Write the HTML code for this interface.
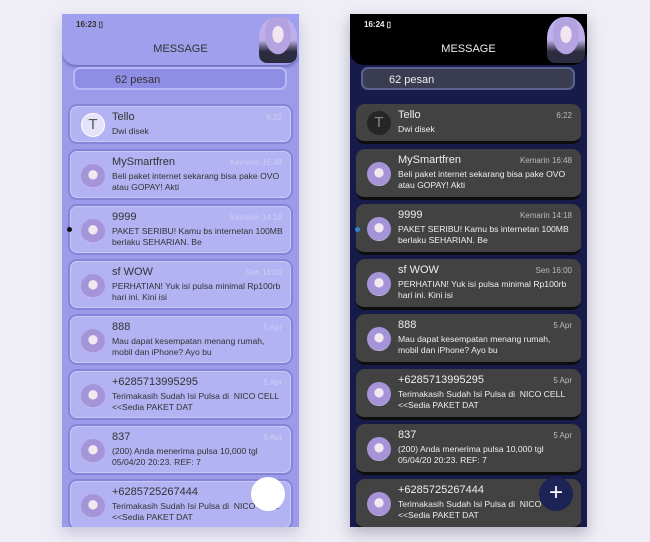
<!DOCTYPE html>
<html><head><meta charset="utf-8"><style>
*{margin:0;padding:0;box-sizing:border-box}
body{width:650px;height:542px;background:#efeef6;font-family:"Liberation Sans",sans-serif;position:relative;overflow:hidden}
.ph{position:absolute;top:14px;width:237px;height:513px;overflow:hidden}
.l{left:62px;background:#9c9bea;box-shadow:0 6px 14px rgba(120,120,170,.35)}
.r{left:350px;background:#161b4a;box-shadow:0 6px 14px rgba(60,60,90,.35)}
.hd{position:absolute;left:0;top:0;width:237px;height:51px;border-radius:0 0 14px 14px}
.l .hd{background:#a09fed;box-shadow:0 2px 3px rgba(60,60,140,.5)}
.r .hd{background:#000}
.tm{position:absolute;left:14px;top:6px;font-size:8px;font-weight:bold}
.l .tm{color:#333}.r .tm{color:#eee}
.sig{position:absolute;right:12px;top:6px;font-size:7px}
.l .sig{color:#333}.r .sig{color:#ddd}
.ti{position:absolute;left:0;width:237px;top:29px;text-align:center;font-size:11px}
.l .ti{color:#333}.r .ti{color:#eee}
.av{position:absolute;right:2px;top:3px;width:38px;height:46px;border-radius:45% 45% 8px 8px;background:radial-gradient(ellipse at 50% 38%,#f3e6ef 0 20%,#b3a3e0 22% 48%,transparent 50%),linear-gradient(#c0b0ea 0 50%,#2c2c40 75%)}
.sr{position:absolute;left:11px;top:53px;width:214px;height:23px;border-radius:7px;font-size:11px;padding:5px 0 0 40px}
.l .sr{background:#8f8ee6;border:2px solid #b9b8f4;color:#333}
.r .sr{background:#3a3d52;border:2px solid #5a6290;color:#eee;padding-left:26px}
.c{position:absolute;left:6px;width:225px;height:51px;border-radius:9px;overflow:hidden}
.c.f{height:40px}
.l .c{background:#b3b2f3;border:2px solid #8584d8;box-shadow:inset 0 0 0 1px #c9c8f8}
.r .c{background:#424242;border-bottom:3px solid #0d0d0d}
.c .a{position:absolute;left:11px;top:13px;width:24px;height:24px;border-radius:50%;background:radial-gradient(circle at 50% 45%,#f2e8f0 0 25%,#a595d8 27% 70%,#d8ccee 72%)}
.c.f .a{top:7px}
.c .a.t{background:#e4e3fa;border:1px solid #fff;color:#555;font-size:15px;text-align:center;line-height:22px}
.r .c .a.t{background:#262626;border:none;color:#888;line-height:24px}
.c .n{position:absolute;left:42px;top:5px;font-size:11px}
.c .d{position:absolute;right:9px;top:7px;font-size:8px}
.c .m{position:absolute;left:42px;top:20px;font-size:8.6px;line-height:11px;white-space:nowrap}
.l .n,.l .m{color:#333}.l .d{color:#cfcef4}
.r .n,.r .m{color:#eee}.r .d{color:#bbb}
.dot{position:absolute;left:5px;top:213px;width:5px;height:5px;border-radius:50%}
.fab{position:absolute;left:189px;top:463px;width:34px;height:34px;border-radius:50%}
.l .fab{background:#fff}
.r .fab{background:#1c2356;color:#fff;font-size:24px;text-align:center;line-height:32px}
</style></head><body>

<div class="ph l">
<div class="hd"><div class="tm">16:23 ▯</div><div class="sig">.ıl ◡▭</div><div class="ti">MESSAGE</div><div class="av"></div></div>
<div class="sr">62 pesan</div>
<div class="c f" style="top:90px"><div class="a t">T</div><div class="n">Tello</div><div class="d">6:22</div><div class="m">Dwi disek</div></div>
<div class="c" style="top:135px"><div class="a"></div><div class="n">MySmartfren</div><div class="d">Kemarin 16:48</div><div class="m">Beli paket internet sekarang bisa pake OVO<br>atau GOPAY! Akti</div></div>
<div class="c" style="top:190px"><div class="a"></div><div class="n">9999</div><div class="d">Kemarin 14:18</div><div class="m">PAKET SERIBU! Kamu bs internetan 100MB<br>berlaku SEHARIAN. Be</div></div>
<div class="c" style="top:245px"><div class="a"></div><div class="n">sf WOW</div><div class="d">Sen 16:00</div><div class="m">PERHATIAN! Yuk isi pulsa minimal Rp100rb<br>hari ini. Kini isi</div></div>
<div class="c" style="top:300px"><div class="a"></div><div class="n">888</div><div class="d">5 Apr</div><div class="m">Mau dapat kesempatan menang rumah,<br>mobil dan iPhone? Ayo bu</div></div>
<div class="c" style="top:355px"><div class="a"></div><div class="n">+6285713995295</div><div class="d">5 Apr</div><div class="m">Terimakasih Sudah Isi Pulsa di &nbsp;NICO CELL<br>&lt;&lt;Sedia PAKET DAT</div></div>
<div class="c" style="top:410px"><div class="a"></div><div class="n">837</div><div class="d">5 Apr</div><div class="m">(200) Anda menerima pulsa 10,000 tgl<br>05/04/20 20:23. REF: 7</div></div>
<div class="c" style="top:465px"><div class="a"></div><div class="n">+6285725267444</div><div class="d">5 Apr</div><div class="m">Terimakasih Sudah Isi Pulsa di &nbsp;NICO CELL<br>&lt;&lt;Sedia PAKET DAT</div></div>
<div class="dot" style="background:#111"></div>
<div class="fab"></div>
</div>

<div class="ph r">
<div class="hd"><div class="tm">16:24 ▯</div><div class="sig">.ıl ◡</div><div class="ti">MESSAGE</div><div class="av"></div></div>
<div class="sr">62 pesan</div>
<div class="c f" style="top:90px"><div class="a t">T</div><div class="n">Tello</div><div class="d">6:22</div><div class="m">Dwi disek</div></div>
<div class="c" style="top:135px"><div class="a"></div><div class="n">MySmartfren</div><div class="d">Kemarin 16:48</div><div class="m">Beli paket internet sekarang bisa pake OVO<br>atau GOPAY! Akti</div></div>
<div class="c" style="top:190px"><div class="a"></div><div class="n">9999</div><div class="d">Kemarin 14:18</div><div class="m">PAKET SERIBU! Kamu bs internetan 100MB<br>berlaku SEHARIAN. Be</div></div>
<div class="c" style="top:245px"><div class="a"></div><div class="n">sf WOW</div><div class="d">Sen 16:00</div><div class="m">PERHATIAN! Yuk isi pulsa minimal Rp100rb<br>hari ini. Kini isi</div></div>
<div class="c" style="top:300px"><div class="a"></div><div class="n">888</div><div class="d">5 Apr</div><div class="m">Mau dapat kesempatan menang rumah,<br>mobil dan iPhone? Ayo bu</div></div>
<div class="c" style="top:355px"><div class="a"></div><div class="n">+6285713995295</div><div class="d">5 Apr</div><div class="m">Terimakasih Sudah Isi Pulsa di &nbsp;NICO CELL<br>&lt;&lt;Sedia PAKET DAT</div></div>
<div class="c" style="top:410px"><div class="a"></div><div class="n">837</div><div class="d">5 Apr</div><div class="m">(200) Anda menerima pulsa 10,000 tgl<br>05/04/20 20:23. REF: 7</div></div>
<div class="c" style="top:465px"><div class="a"></div><div class="n">+6285725267444</div><div class="d">5 Apr</div><div class="m">Terimakasih Sudah Isi Pulsa di &nbsp;NICO CELL<br>&lt;&lt;Sedia PAKET DAT</div></div>
<div class="dot" style="background:#2f86d8"></div>
<div class="fab">+</div>
</div>
</body></html>
